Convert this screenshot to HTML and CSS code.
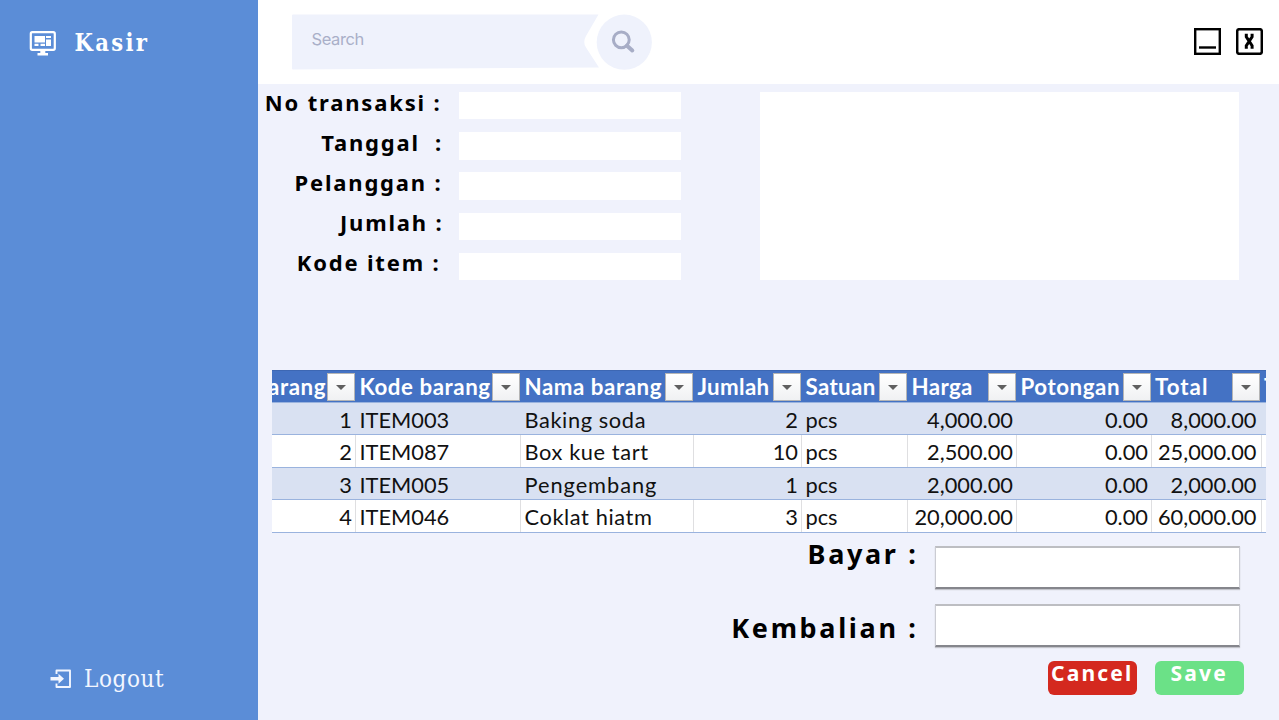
FILE: index.html
```html
<!DOCTYPE html>
<html lang="id">
<head>
<meta charset="utf-8">
<title>Kasir</title>
<link rel="stylesheet" href="styles.css">
</head>
<body>
<div class="app">
  <aside class="sidebar">
    <div class="brand">
      <svg class="brand-icon" viewBox="0 0 27 26" width="27" height="26">
        <rect x="1.8" y="1.2" width="24" height="17.600" rx="1.5" fill="none" stroke="#fff" stroke-width="2.2"/>
        <path fill="#fff" d="M5.500 5h10.500v6.500h-10.500zM17 5h5v2h-5zM17 8.500h5v6.500h-5zM5.500 12.800h4v2.200h-4zM11.500 12.800h4.500v2.200h-4.500zM11.300 18.500h5v3.500h2.700v2.500h-10.500v-2.500h2.800z"/>
      </svg>
      <span class="brand-name">Kasir</span>
    </div>
    <a class="logout">
      <svg viewBox="0 0 22 20" width="22" height="20">
        <path d="M6.500 5V1.500h13.500v16.500H6.500V14.500" fill="none" stroke="#f2f6ff" stroke-width="1.900" stroke-linejoin="round"/>
        <path d="M.5 7.900h8V4.700l5.500 5-5.500 5v-3.200h-8z" fill="#f2f6ff"/>
      </svg>
      <span class="logout-text">Logout</span>
    </a>
  </aside>
  <div class="main">
    <header class="topbar">
      <div class="search">
        <svg class="search-shape" viewBox="0 0 360 56" width="360" height="56">
          <path d="M1 .5H306.500L294 22Q290.500 28 294 33.500L307 53.500L1 55.500Q0 55.500 0 54.500V1.500Q0 .5 1 .5z" fill="#eff2fc"/>
          <circle cx="332.300" cy="28.200" r="27.600" fill="#eff2fc"/>
          <circle cx="329.300" cy="25.800" r="7.900" fill="none" stroke="#a7adc6" stroke-width="3"/>
          <path d="M335 31.700L340.300 36.500" stroke="#a7adc6" stroke-width="4" stroke-linecap="round"/>
        </svg>
        <span class="search-text">Search</span>
      </div>
      <div class="window-buttons">
        <svg viewBox="0 0 27 27" width="27" height="27">
          <rect x="1.200" y="1.200" width="24.600" height="24.600" fill="none" stroke="#000" stroke-width="2.400"/>
          <path d="M5 19.500h17" stroke="#000" stroke-width="2.400"/>
        </svg>
        <svg viewBox="0 0 27 27" width="27" height="27">
          <rect x="1.200" y="1.200" width="24.600" height="24.600" rx="2" fill="none" stroke="#000" stroke-width="2.500"/>
          <path d="M10.300 5.800v3L13.200 13.300L16.100 8.800V5.800M10.300 20.800v-3L13.200 13.300L16.100 17.800V20.800" fill="none" stroke="#000" stroke-width="3"/>
        </svg>
      </div>
    </header>
    <section class="entry">
      <div class="fields">
        <label class="f1"><span>No transaksi :</span><input></label>
        <label class="f2"><span>Tanggal&nbsp; :</span><input></label>
        <label class="f3"><span>Pelanggan :</span><input></label>
        <label class="f4"><span>Jumlah :</span><input></label>
        <label class="f5"><span>Kode item :</span><input></label>
      </div>
      <div class="display"></div>
    </section>
    <div class="items">
      <div class="row head">
        <div class="first"><span>arang</span><i></i></div><div><span>Kode barang</span><i></i></div><div><span>Nama barang</span><i></i></div><div class="tight"><span>Jumlah</span><i></i></div><div class="tight"><span>Satuan</span><i></i></div><div class="tight"><span>Harga</span><i></i></div><div><span>Potongan</span><i></i></div><div class="wide"><span>Total</span><i></i></div><div class="last"><span>T</span></div>
      </div>
      <div class="row band"><div class="n">1</div><div class="code">ITEM003</div><div class="name">Baking soda</div><div class="n">2</div><div>pcs</div><div class="n">4,000.00</div><div class="n">0.00</div><div class="n">8,000.00</div><div></div></div>
      <div class="row"><div class="n">2</div><div class="code">ITEM087</div><div class="name">Box kue tart</div><div class="n">10</div><div>pcs</div><div class="n">2,500.00</div><div class="n">0.00</div><div class="n">25,000.00</div><div></div></div>
      <div class="row band"><div class="n">3</div><div class="code">ITEM005</div><div class="name long">Pengembang</div><div class="n">1</div><div>pcs</div><div class="n">2,000.00</div><div class="n">0.00</div><div class="n">2,000.00</div><div></div></div>
      <div class="row"><div class="n">4</div><div class="code">ITEM046</div><div class="name">Coklat hiatm</div><div class="n">3</div><div>pcs</div><div class="n">20,000.00</div><div class="n">0.00</div><div class="n">60,000.00</div><div></div></div>
    </div>
    <section class="payment">
      <label class="pay"><span>Bayar :</span><input></label>
      <label class="pay change"><span>Kembalian :</span><input></label>
      <div class="actions">
        <button class="cancel">Cancel</button>
        <button class="save">Save</button>
      </div>
    </section>
  </div>
</div>
</body>
</html>
```

FILE: styles.css
```css
* { box-sizing: border-box; }
body { margin: 0; font-family: "Noto Sans", sans-serif; }
.app { display: flex; width: 1279px; height: 720px; overflow: hidden; background: #f0f2fc; }

.sidebar { display: flex; flex-direction: column; justify-content: space-between; width: 258px; background: #5b8dd7; color: #fff; font-family: "DejaVu Serif Condensed", "DejaVu Serif", serif; font-stretch: condensed; }
.brand { display: flex; padding: 24px 0 0 29px; }
.brand-icon { margin-top: 7px; }
.brand-name { margin-left: 18.500px; line-height: 38px; font-size: 23.500px; font-weight: 700; letter-spacing: 2.300px; }
.logout { display: flex; padding: 0 0 23px 50px; color: #f2f6ff; }
.logout svg { margin-top: 8px; }
.logout-text { margin-left: 12px; line-height: 36px; font-size: 24px; letter-spacing: .6px; }

.main { display: flex; flex-direction: column; width: 1021px; }
.topbar { display: flex; justify-content: space-between; height: 84px; padding: 14px 16px 0 34px; background: #fff; }
.search { display: grid; height: 56px; }
.search-shape, .search-text { grid-area: 1 / 1; }
.search-text { padding: 15px 0 0 19.500px; font: 400 16.500px/21px Inter, sans-serif; letter-spacing: -.4px; color: #a9afc8; }
.window-buttons { display: flex; gap: 15px; padding-top: 14px; }

.entry { display: flex; justify-content: space-between; height: 286px; padding: 3px 40px 0 0; }
.fields { display: grid; grid-template-rows: repeat(5, 40.200px); }
.fields label { display: flex; }
.fields span { display: flex; justify-content: flex-end; width: 201px; padding-right: 17.500px; white-space: pre; font-weight: 700; font-size: 22px; line-height: 30px; letter-spacing: 1.820px; color: #000; }
.fields .f2 span { padding-right: 16px; }
.fields .f3 span { padding-right: 16.500px; line-height: 31px; }
.fields .f4 span { padding-right: 15.500px; line-height: 29px; }
.fields .f5 span { padding-right: 18.500px; line-height: 29px; }
input { border: 0; border-radius: 0; padding: 0; outline: 0; background: #fff; }
.fields input { width: 222.400px; height: 27.400px; margin-top: 5px; }
.display { width: 479px; height: 188px; margin-top: 5px; background: #fff; }

.items { width: 994px; height: 163px; margin-left: 14px; overflow: hidden; font-family: Lato, sans-serif; font-size: 21.800px; color: #111; background: #fff; }
.row { display: grid; grid-template-columns: 84px 165px 173px 108px 106px 109px 135px 110px 4px; height: 32.600px; line-height: 33px; border-bottom: 1px solid #9ab3de; white-space: nowrap; }
.row > div { padding: 0 4px 0 3.500px; border-right: 1px solid #dfdfe1; overflow: hidden; }
.row > div:last-child { padding: 0; border: 0; }
.row.band { background: #d9e1f2; }
.row.band > div { border-color: transparent; }
.row > .n { padding: 0 3px 0 0; text-align: right; }
.row > .n:nth-child(8) { padding-right: 4.500px; }
.row .name { letter-spacing: .6px; }
.row .long { letter-spacing: .95px; }
.row.head { background: #4472c4; border-top: 1px solid #3d67b3; color: #fff; font-weight: 700; font-size: 22.300px; line-height: 32px; letter-spacing: .55px; }
.row.head > div { display: flex; justify-content: space-between; padding: 0 0 0 3.500px; border-color: transparent; }
.row.head > .first { justify-content: flex-end; padding-left: 0; }
.row.head > .first span { margin-right: 1px; }
.row.head > .tight { letter-spacing: .35px; }
.row.head > .wide { padding: 0 1px 0 3px; letter-spacing: 1px; }
.row.head > .last { padding-left: 2px; }
.head i { flex: none; display: flex; justify-content: center; align-items: center; width: 28px; height: 28px; margin-top: 2px; border: 1px solid #b5b5b5; background: linear-gradient(#fff, #f0f1f3); }
.head i::after { content: ""; border: 5.500px solid transparent; border-top-color: #606060; border-bottom: 0; }

.payment { display: flex; flex-direction: column; align-items: flex-end; padding: 3px 39.500px 0 0; }
.pay { display: flex; height: 57.500px; }
.pay span { font-weight: 700; font-size: 27px; line-height: 36px; letter-spacing: 2.650px; padding-right: 16px; color: #000; }
.pay input { width: 305px; height: 43px; margin-top: 10px; border: 1px solid #cbccd3; border-top: 2px solid #bdbec2; border-bottom: 2px solid #85868c; box-shadow: 0 1px 1px #c3c4cb; }
.change span { padding-top: 16px; }
.actions { display: flex; gap: 18.500px; margin: 10px -4px 0 0; }
.actions button { width: 88.500px; height: 33.500px; padding: 0 0 8px; border: 0; border-radius: 6px; font: 700 21px/25px "Noto Sans", sans-serif; letter-spacing: 2.200px; color: #fff; }
.cancel { background: #d4291f; }
.save { background: #6be187; }
```
